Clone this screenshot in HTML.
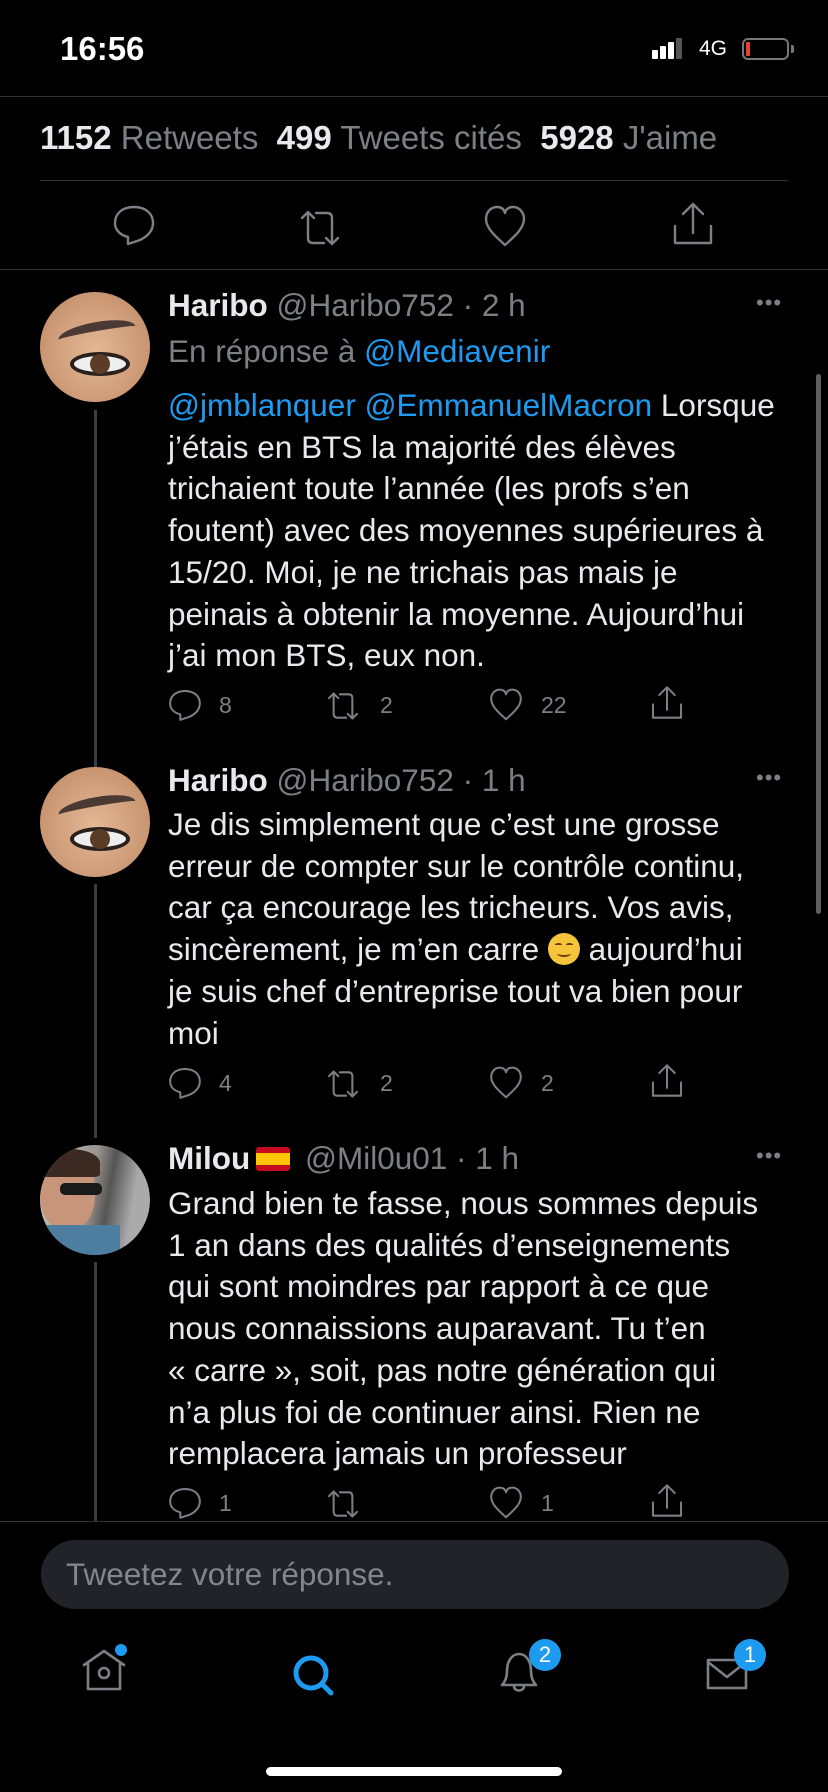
<!DOCTYPE html>
<html><head><meta charset="utf-8"><style>
*{margin:0;padding:0;box-sizing:border-box}
body{width:828px;height:1792px;background:#000;position:relative;overflow:hidden;font-family:"Liberation Sans",sans-serif;color:#e7e9ea}
.a{position:absolute}
.hl{position:absolute;height:1px;background:#2f3336}
.t{position:absolute;left:168px;font-size:31.5px;line-height:41.7px;white-space:nowrap}
.g{color:#7b8087}
.b{color:#1d9bf0}
.n{font-weight:bold;color:#e7e9ea}
.av{position:absolute;left:40px;width:110px;height:110px;border-radius:50%;overflow:hidden}
.cnt{position:absolute;font-size:23px;color:#7b8087}
.dots{position:absolute;left:756px;font-size:22px;color:#7b8087;letter-spacing:1px}
svg{position:absolute;overflow:visible}
</style></head><body>
<div class="a" style="left:60px;top:30px;font-size:33px;font-weight:bold;color:#fff">16:56</div>
<div class="a" style="left:652px;top:50px;width:6px;height:9px;background:#fff;border-radius:1px"></div>
<div class="a" style="left:660px;top:46px;width:6px;height:13px;background:#fff;border-radius:1px"></div>
<div class="a" style="left:668px;top:42px;width:6px;height:17px;background:#fff;border-radius:1px"></div>
<div class="a" style="left:676px;top:38px;width:6px;height:21px;background:#555;border-radius:1px"></div>
<div class="a" style="left:699px;top:37px;font-size:21px;color:#fff">4G</div>
<div class="a" style="left:742px;top:38px;width:47px;height:22px;border:2px solid #777;border-radius:6px"></div>
<div class="a" style="left:746px;top:42px;width:4px;height:14px;background:#e8413a;border-radius:1px"></div>
<div class="a" style="left:791px;top:45px;width:3px;height:8px;background:#777;border-radius:0 2px 2px 0"></div>
<div class="hl" style="left:0;width:828px;top:96px"></div>
<div class="a" style="left:40px;top:119px;font-size:33px;white-space:nowrap"><b>1152</b> <span class="g">Retweets</span>&nbsp; <b>499</b> <span class="g">Tweets cités</span>&nbsp; <b>5928</b> <span class="g">J'aime</span></div>
<div class="hl" style="left:40px;width:748px;top:180px"></div>
<svg width="0" height="0" style="left:0;top:0"><defs>
<path id="rt" d="M-18 -10 l6 -6 l6 6 M-12 -15 v25 q0 5 5 5 h11 M6 10 l6 6 l6 -6 M-4 -15 h11 q5 0 5 5 v25"/>
<path id="rp" d="M-6 19 v-7 c-8 -2 -13 -7 -13 -14 c0 -10 8 -16 19 -16 c11 0 19 6 19 16 c0 9 -7 14 -13 17 z"/>
<path id="lk" d="M0 17 c-10 -9 -19 -17 -19 -26 c0 -7 5 -12 11 -12 c4 0 7 2 8 6 c1 -4 4 -6 8 -6 c6 0 11 5 11 12 c0 9 -9 17 -19 26 z"/>
<path id="sh" d="M0 -23 v28 M-10 -14 l10 -10 l10 10 M-18 -2 v17 h36 v-17"/>
</defs></svg>
<svg style="left:0;top:0" width="828" height="300" fill="none" stroke="#7b8087" stroke-width="2.4" stroke-linecap="round" stroke-linejoin="round">
<use href="#rp" transform="translate(134,225)"/>
<use href="#rt" transform="translate(320,228)"/>
<use href="#lk" transform="translate(505,228)"/>
<use href="#sh" transform="translate(693,228)"/>
</svg>
<div class="hl" style="left:0;width:828px;top:269px"></div>
<div class="a" style="left:94px;top:410px;width:3px;height:358px;background:#3a3d41"></div>
<div class="a" style="left:94px;top:884px;width:3px;height:254px;background:#3a3d41"></div>
<div class="a" style="left:94px;top:1262px;width:3px;height:260px;background:#3a3d41"></div>
<div class="av" style="top:292px;background:radial-gradient(ellipse at 50% 55%,#e4b997,#c99571 70%,#b98664)">
<div class="a" style="left:18px;top:30px;width:78px;height:22px;border-top:9px solid #4a3a33;border-radius:50% 50% 0 0;transform:rotate(-10deg)"></div>
<div class="a" style="left:30px;top:60px;width:60px;height:24px;background:#eee;border-radius:50%;border:4px solid #2b211c"></div>
<div class="a" style="left:50px;top:62px;width:20px;height:20px;background:#5b3d25;border-radius:50%"></div>
</div>
<div class="av" style="top:767px;background:radial-gradient(ellipse at 50% 55%,#e4b997,#c99571 70%,#b98664)">
<div class="a" style="left:18px;top:30px;width:78px;height:22px;border-top:9px solid #4a3a33;border-radius:50% 50% 0 0;transform:rotate(-10deg)"></div>
<div class="a" style="left:30px;top:60px;width:60px;height:24px;background:#eee;border-radius:50%;border:4px solid #2b211c"></div>
<div class="a" style="left:50px;top:62px;width:20px;height:20px;background:#5b3d25;border-radius:50%"></div>
</div>
<div class="av" style="top:1145px;background:linear-gradient(100deg,#c9c6c2 0%,#9a9590 45%,#555 60%,#aaa 80%)">
<div class="a" style="left:0;top:10px;width:55px;height:75px;background:#c8957a;border-radius:45%"></div>
<div class="a" style="left:0;top:4px;width:60px;height:28px;background:#3a2a22;border-radius:50% 50% 10% 10%"></div>
<div class="a" style="left:20px;top:38px;width:42px;height:12px;background:#1a1a1a;border-radius:5px"></div>
<div class="a" style="left:0;top:80px;width:80px;height:30px;background:#4d7ea0"></div>
</div>
<div class="t" style="top:285px"><span class="n">Haribo</span> <span class="g">@Haribo752 · 2 h</span></div>
<div class="dots" style="top:290px">•••</div>
<div class="t" style="top:331px"><span class="g">En réponse à </span><span class="b">@Mediavenir</span></div>
<div class="t" style="top:385px"><span class="b">@jmblanquer @EmmanuelMacron</span> Lorsque<br>j’étais en BTS la majorité des élèves<br>trichaient toute l’année (les profs s’en<br>foutent) avec des moyennes supérieures à<br>15/20. Moi, je ne trichais pas mais je<br>peinais à obtenir la moyenne. Aujourd’hui<br>j’ai mon BTS, eux non.</div>
<div class="t" style="top:760px"><span class="n">Haribo</span> <span class="g">@Haribo752 · 1 h</span></div>
<div class="dots" style="top:765px">•••</div>
<div class="t" style="top:804px">Je dis simplement que c’est une grosse<br>erreur de compter sur le contrôle continu,<br>car ça encourage les tricheurs. Vos avis,<br>sincèrement, je m’en carre <span style="display:inline-block;width:32px;height:32px;border-radius:50%;background:#f7c53a;vertical-align:-5px;position:relative"><span style="position:absolute;left:7px;top:10px;width:7px;height:3px;border-top:2px solid #6b3b12;border-radius:50% 50% 0 0"></span><span style="position:absolute;left:18px;top:10px;width:7px;height:3px;border-top:2px solid #6b3b12;border-radius:50% 50% 0 0"></span><span style="position:absolute;left:9px;top:17px;width:14px;height:7px;border-bottom:2px solid #6b3b12;border-radius:0 0 50% 50%"></span></span> aujourd’hui<br>je suis chef d’entreprise tout va bien pour<br>moi</div>
<div class="t" style="top:1138px"><span class="n">Milou</span><span style="display:inline-block;width:34px;height:24px;margin:0 6px 0 6px;vertical-align:-2px;border-radius:3px;background:linear-gradient(#c60b1e 25%,#ffc400 25%,#ffc400 75%,#c60b1e 75%)"></span> <span class="g">@Mil0u01 · 1 h</span></div>
<div class="dots" style="top:1143px">•••</div>
<div class="t" style="top:1183px">Grand bien te fasse, nous sommes depuis<br>1 an dans des qualités d’enseignements<br>qui sont moindres par rapport à ce que<br>nous connaissions auparavant. Tu t’en<br>« carre », soit, pas notre génération qui<br>n’a plus foi de continuer ainsi. Rien ne<br>remplacera jamais un professeur</div>
<svg style="left:0;top:0" width="828" height="1600" fill="none" stroke="#7b8087" stroke-width="2.6" stroke-linecap="round" stroke-linejoin="round">
<g id="r1">
<use href="#rp" transform="translate(185,705) scale(0.78)"/>
<use href="#rt" transform="translate(343,706) scale(0.78)"/>
<use href="#lk" transform="translate(506,706) scale(0.78)"/>
<use href="#sh" transform="translate(667,706) scale(0.78)"/>
</g>
<use href="#r1" transform="translate(0,378)"/>
<use href="#r1" transform="translate(0,798)"/>
</svg>
<div class="cnt" style="left:219px;top:692px">8</div><div class="cnt" style="left:380px;top:692px">2</div><div class="cnt" style="left:541px;top:692px">22</div>
<div class="cnt" style="left:219px;top:1070px">4</div><div class="cnt" style="left:380px;top:1070px">2</div><div class="cnt" style="left:541px;top:1070px">2</div>
<div class="cnt" style="left:219px;top:1490px">1</div><div class="cnt" style="left:541px;top:1490px">1</div>
<div class="hl" style="left:0;width:828px;top:1521px"></div>
<div class="a" style="left:816px;top:374px;width:5px;height:540px;background:#5d5f62;border-radius:3px"></div>
<div class="a" style="left:41px;top:1540px;width:748px;height:69px;background:#202327;border-radius:35px"></div>
<div class="a" style="left:66px;top:1556px;font-size:31.5px;color:#83878c">Tweetez votre réponse.</div>
<svg style="left:0;top:0" width="828" height="1792" fill="none" stroke-width="2.6" stroke-linecap="round" stroke-linejoin="round">
<path stroke="#7b8087" d="M84 1665 l20 -14 l20 14 M88 1663 v26 h32 v-26"/>
<circle stroke="#7b8087" cx="104" cy="1673" r="5"/>
<circle fill="#1d9bf0" stroke="none" cx="121" cy="1650" r="6"/>
<circle stroke="#1d9bf0" stroke-width="5" cx="311" cy="1673" r="15"/>
<path stroke="#1d9bf0" stroke-width="5" d="M322 1684 l9 9"/>
<path stroke="#7b8087" d="M502 1685 h34 c-3 -3 -5 -7 -5 -14 c0 -10 -5 -17 -12 -17 c-7 0 -12 7 -12 17 c0 7 -2 11 -5 14 z M514 1686 c0 6 10 6 10 0"/>
<path stroke="#7b8087" d="M708 1660 h38 v28 h-38 z M708 1662 l19 15 l19 -15"/>
</svg>
<div class="a" style="left:529px;top:1639px;width:32px;height:32px;border-radius:50%;background:#1d9bf0;color:#fff;font-size:22px;text-align:center;line-height:32px">2</div>
<div class="a" style="left:734px;top:1639px;width:32px;height:32px;border-radius:50%;background:#1d9bf0;color:#fff;font-size:22px;text-align:center;line-height:32px">1</div>
<div class="a" style="left:266px;top:1767px;width:296px;height:9px;background:#fff;border-radius:5px"></div>
</body></html>
